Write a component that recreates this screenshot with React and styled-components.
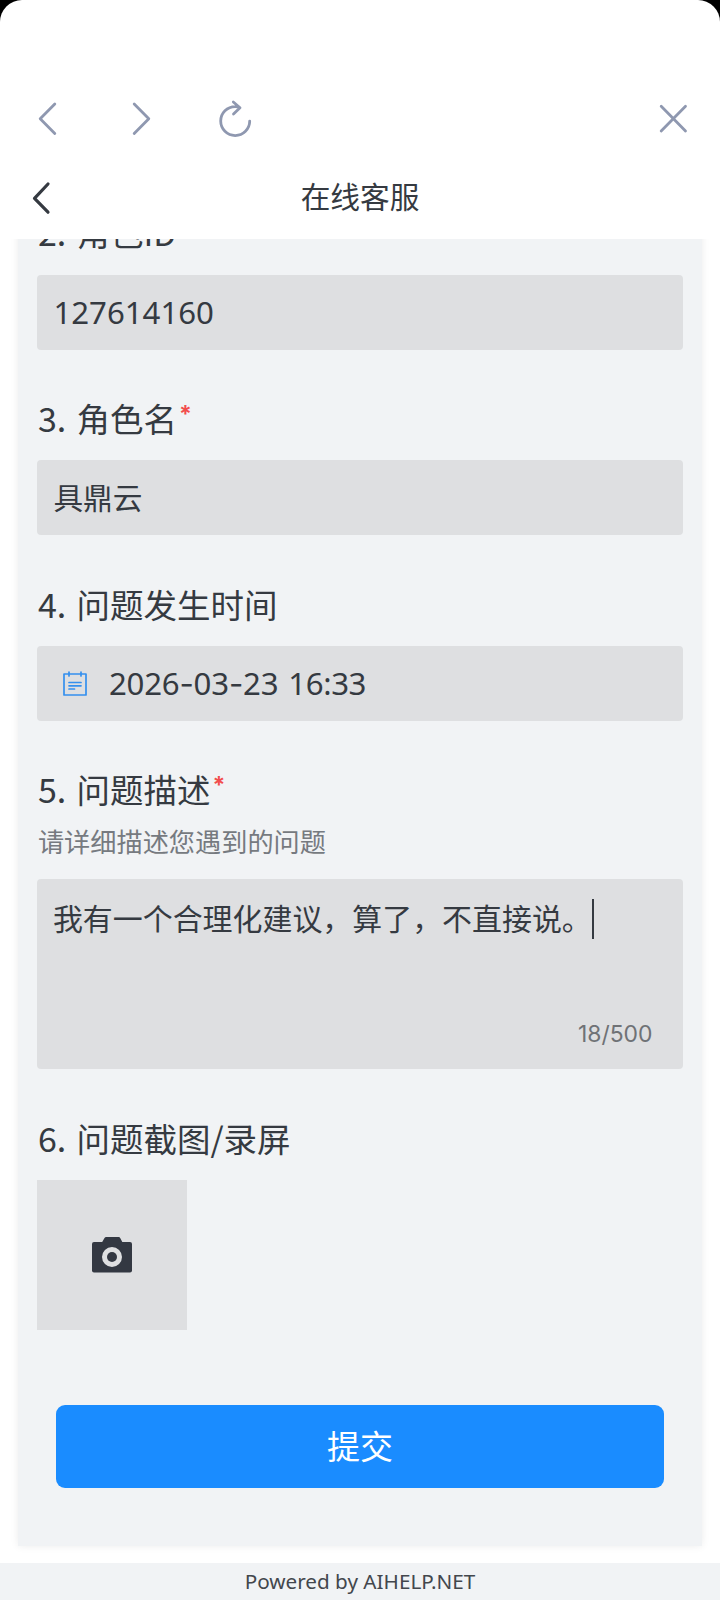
import React from "react";
import styled, { createGlobalStyle } from "styled-components";

const ink = "#353a41";
const navGrey = "#8f98b0";

const Global = createGlobalStyle`
  * { box-sizing: border-box; }
  body { margin: 0; background: #000; }
`;

const Screen = styled.div`
  width: 720px;
  height: 1600px;
  display: flex;
  flex-direction: column;
  overflow: hidden;
  background: #fff;
  border-radius: 22px 22px 0 0;
  color: ${ink};
  font-family: "Noto Sans CJK SC", sans-serif;
`;

const BrowserBar = styled.nav`
  height: 158px;
  flex: none;
  padding: 80px 25px 0 26px;
  display: flex;
  align-items: center;
`;

const IconButton = styled.button`
  border: 0;
  padding: 0;
  background: none;
  width: 44px;
  height: 44px;
  margin-right: ${(p) => p.$gap || 0}px;
  margin-left: ${(p) => (p.$end ? "auto" : 0)};
  color: ${(p) => p.$color || navGrey};
  svg { display: block; }
`;

const TitleBar = styled.header`
  height: 81px;
  flex: none;
  display: grid;
  grid-template-columns: 44px 1fr 44px;
  align-items: center;
  padding: 0 20px;
`;

const Title = styled.h1`
  margin: 0;
  text-align: center;
  font-size: 29.7px;
  line-height: 40px;
  font-weight: 400;
  padding-bottom: 6px;
`;

const Viewport = styled.main`
  height: 1324px;
  flex: none;
  overflow: hidden;
  display: flex;
  flex-direction: column;
  justify-content: flex-end;
  padding: 0 18px 17px;
`;

const Card = styled.form`
  flex: none;
  background: #f1f3f5;
  padding: 0 19.5px 58px 19.4px;
  box-shadow: 0 0 8px rgba(0, 0, 0, 0.08);
`;

const Field = styled.section`
  margin-bottom: ${(p) => p.$after ?? 43.3}px;
`;

const Label = styled.div`
  height: 50px;
  display: flex;
  align-items: baseline;
  font-size: 33.5px;
  line-height: 50px;
  margin-bottom: ${(p) => p.$after ?? 17.4}px;
  white-space: nowrap;
`;

const Ordinal = styled.span`
  width: 39px;
  flex: none;
  padding-left: 0.5px;
  font-size: 34px;
`;

const Required = styled.sup`
  color: #f24d4d;
  font-size: 26px;
  line-height: 1;
  align-self: flex-start;
  margin: 10px 0 0 2px;
  font-family: Inter, sans-serif;
  font-size: 23px;
  font-weight: 700;
`;

const Hint = styled.p`
  margin: 0 0 17.5px;
  color: #767a80;
  font-size: 26.2px;
  line-height: 38px;
  padding: 0 0 2px 0.5px;
`;

const Input = styled.div`
  height: 75px;
  background: #dedfe1;
  border-radius: 4px;
  display: flex;
  align-items: center;
  padding: 0 0 ${(p) => (p.$digits ? 1 : 3)}px ${(p) => p.$indent ?? 16}px;
  font-size: ${(p) => (p.$digits ? 31.2 : 29.7)}px;
  font-family: ${(p) => (p.$digits ? '"Noto Sans"' : '"Noto Sans CJK SC"')}, sans-serif;
  white-space: pre;
  svg { flex: none; margin: 1px 21px 0 0; }
`;

const DateText = styled.span`
  letter-spacing: -0.2px;
  margin-right: 10px;
`;

const TimeText = styled.span`
  letter-spacing: -0.4px;
`;

const Dash = styled.span`
  font-family: Inter, sans-serif;
`;

const TextArea = styled.div`
  height: 190px;
  background: #dedfe1;
  border-radius: 4px;
  display: flex;
  flex-direction: column;
  justify-content: space-between;
  padding: 20px 30px 18px 15.5px;
`;

const Message = styled.div`
  height: 40px;
  line-height: 36px;
  font-size: 29.95px;
  display: flex;
  white-space: nowrap;
`;

const Caret = styled.i`
  width: 2px;
  height: 40px;
  background: ${ink};
`;

const Counter = styled.div`
  text-align: right;
  color: #6f7276;
  font: 22.9px/34px Inter, sans-serif;
`;

const Upload = styled.div`
  width: 150px;
  height: 150px;
  background: #dedfe1;
  display: flex;
  align-items: center;
  justify-content: center;
`;

const Submit = styled.button`
  display: block;
  width: 608px;
  height: 83px;
  margin: 0 auto;
  padding: 0 0 4px;
  border: 0;
  border-radius: 9px;
  background: #1a8cff;
  color: #fff;
  font: 33px/48px "Noto Sans CJK SC", sans-serif;
`;

const Footer = styled.footer`
  flex: 1;
  background: #f1f3f5;
  text-align: center;
  color: #43474d;
  font: 20.7px/36px "Noto Sans", sans-serif;
`;

const Stroke = ({ d, width = 2.8 }) => (
  <svg width="44" height="44" viewBox="0 0 44 44" fill="none" stroke="currentColor" strokeWidth={width} strokeLinecap="round" strokeLinejoin="round">
    <path d={d} />
  </svg>
);

const CalendarIcon = () => (
  <svg width="26" height="26" viewBox="0 0 26 26" fill="none" stroke="#3490ee" strokeWidth="1.7" strokeLinecap="round" strokeLinejoin="round">
    <path d="M2 3H24V24H2ZM7 1V5M19 1V5M7 11.500H19M7 14.800H19M7 18H12.500" />
  </svg>
);

const CameraIcon = () => (
  <svg width="40" height="36" viewBox="0 0 40 36">
    <path fill="#333842" fillRule="evenodd" d="M14.2 0h12.5q1 0 1.5.9L30.3 5H38q2 0 2 2v26.500q0 2-2 2H2q-2 0-2-2V7q0-2 2-2h8.200L12.500.9Q13.100 0 14.200 0ZM20 10a10 10 0 1 0 0 20a10 10 0 1 0 0-20Z" />
    <circle cx="20" cy="20" r="5" fill="#333842" />
  </svg>
);

function Question({ n, text, required, children, after, labelAfter }) {
  return (
    <Field $after={after}>
      <Label $after={labelAfter}>
        <Ordinal>{n}.</Ordinal>
        {text}
        {required && <Required>*</Required>}
      </Label>
      {children}
    </Field>
  );
}

export default function App() {
  return (
    <>
      <Global />
      <Screen>
        <BrowserBar>
          <IconButton $gap={48} aria-label="后退"><Stroke d="M28.800 7 14.200 21.800 28.800 36.500" /></IconButton>
          <IconButton $gap={52} aria-label="前进"><Stroke d="M16.200 7 30.800 21.800 16.200 36.500" /></IconButton>
          <IconButton aria-label="刷新"><Stroke d="M25.500 10.400C24 9.800 22.500 9.600 21.200 9.600A14.500 14.500 0 1 0 35.700 24.100M19.300 5 26 10.800 19.500 17" /></IconButton>
          <IconButton $end aria-label="关闭"><Stroke d="M10.200 9.300 34.500 34M34.500 9.300 10.200 34" /></IconButton>
        </BrowserBar>
        <TitleBar>
          <IconButton $color={ink} aria-label="返回"><Stroke width={3.2} d="M28 7 14.500 21.300 28 35.200" /></IconButton>
          <Title>在线客服</Title>
        </TitleBar>
        <Viewport>
          <Card as="div">
            <Question n="2" text="角色ID">
              <Input $digits>127614160</Input>
            </Question>
            <Question n="3" text="角色名" required>
              <Input>具鼎云</Input>
            </Question>
            <Question n="4" text="问题发生时间">
              <Input $digits $indent={24.5}>
                <CalendarIcon />
                <DateText>2026<Dash>-</Dash>03<Dash>-</Dash>23</DateText>
                <TimeText>16:33</TimeText>
              </Input>
            </Question>
            <Question n="5" text="问题描述" required labelAfter={7.5}>
              <Hint>请详细描述您遇到的问题</Hint>
              <TextArea>
                <Message>我有一个合理化建议，算了，不直接说。<Caret /></Message>
                <Counter>18/500</Counter>
              </TextArea>
            </Question>
            <Question n="6" text="问题截图/录屏" after={75}>
              <Upload><CameraIcon /></Upload>
            </Question>
            <Submit>提交</Submit>
          </Card>
        </Viewport>
        <Footer>Powered by AIHELP.NET</Footer>
      </Screen>
    </>
  );
}
